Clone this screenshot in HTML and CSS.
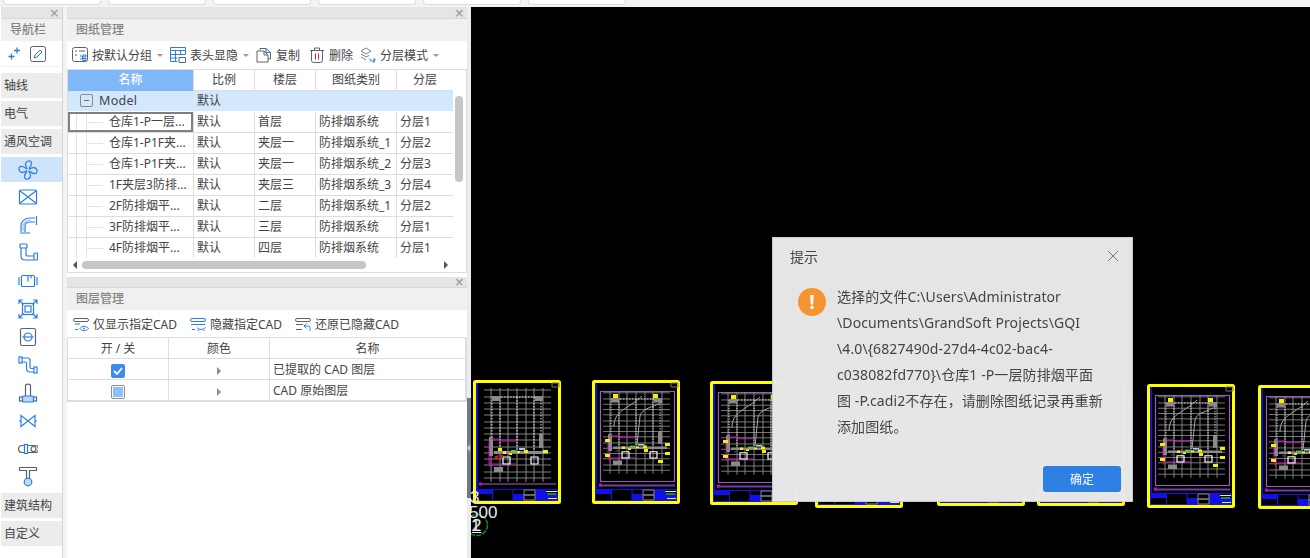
FILE: index.html
```html
<!DOCTYPE html>
<html lang="zh-CN">
<head>
    <meta charset="UTF-8">
    <meta name="viewport" content="width=device-width, initial-scale=1.0">
    <title>图纸管理</title>
    <link rel="stylesheet" href="styles.css">
</head>
<body>
    <svg class="defs" width="0" height="0">
        <symbol id="plan-clutter" viewBox="0 0 88 124">
            <path d="M18 8V102M27 8V102M35 8V102M44 8V102M53 8V102M61 8V102M70 8V102" stroke="#969696" stroke-width=".9"/>
            <path d="M11 10H78M11 17H78M11 23H78M11 29H78M11 35H78M11 42H78M11 48H78M11 54H78M11 60H78M11 67H78M11 73H78M11 79H78M11 85H78M11 92H78M11 98H78" stroke="#8c8c8c" stroke-width=".9"/>
            <path d="M19 17V72M68 17V60M19 17H68M44 17V74M27 17V74M61 17V74" stroke="#e4e4e4" stroke-width="1" stroke-dasharray="1.500 1.500"/>
            <path d="M19 16h8v5h-8zM62 16h8v5h-8zM16 57h4v19h-4zM66 54h4v14h-4zM21 71h54v3H21zM21 87h9v5H21z" fill="#8a8a8a"/>
            <path d="M18 59h8l1 2h16M16 62V84H43M24 76H26" fill="none" stroke="#d400d0" stroke-width="1"/>
            <path d="M17 79V87" stroke="#d400d0" stroke-width="1"/>
            <path d="M30 71h3v3h-3zM36 73h3v2h-3zM44 71h3v2h-3zM51 70h4v3h-4z" fill="#f4f000"/>
            <path d="M38 70h5v2h-5z" fill="#58d040"/>
            <path d="M46 68h6v2h-6z" fill="#9cd0f0"/>
            <path d="M30 77h7v7h-7zM58 77h7v7h-7z" fill="none" stroke="#fff" stroke-width="1.200"/>
        </symbol>
        <symbol id="plan-base" viewBox="0 0 88 124">
            <rect x="1.500" y="1.500" width="85" height="121" rx="1" fill="#000" stroke="#ff0" stroke-width="3"/>
            <path d="M3 3h2v106H3z" fill="#0a14e0"/>
            <path d="M79 3h7v4h-7z" fill="none" stroke="#777"/>
            <path d="M3.500 109.500h81v11h-81z" fill="none" stroke="#1414f0"/>
            <path d="M3 109h16v5H3zM40 114h11v6H40zM62 109h11v11H62zM73 114h12v6H73z" fill="#1010e8"/>
            <path d="M19.500 109v11M40 109v11" stroke="#1414f0"/>
            <path d="M51 110h11v5H51zM51 115h11v5H51z" fill="none" stroke="#888"/>
            <path d="M73 111h11v1H73zM75 118h9v1h-9z" fill="#e8e8e8"/>
            <path d="M74 113h9v2h-9z" fill="#109030"/>
        </symbol>
        <symbol id="plan-a" viewBox="0 0 88 124">
            <use href="#plan-base" width="88" height="124"/>
            <use href="#plan-clutter" width="88" height="124"/>
            <path d="M8 104H83" stroke="#b060c8" stroke-width="1"/>
            <path d="M6 102.500h3v3H6z" fill="#d400d0"/>
            <path d="M22 76h3v3h-3zM27 75h3v3h-3z" fill="#e8121c"/>
            <path d="M25 68h4v3h-4zM70 70h5v3h-5z" fill="#f4f000"/>
        </symbol>
        <symbol id="plan-b" viewBox="0 0 88 124">
            <use href="#plan-base" width="88" height="124"/>
            <path d="M8.500 11.500h74v90h-74z" fill="none" stroke="#9a5cc0" stroke-width="1.200"/>
            <use href="#plan-clutter" width="88" height="124" transform="translate(0 4) scale(1 .88)"/>
            <path d="M22 47C22 30 35 30 50 16M45 65L48 36C50 28 60 28 70 22" fill="none" stroke="#a8a8a8" stroke-width="1"/>
            <path d="M7 105.500H83" stroke="#70409c" stroke-width="2"/>
            <path d="M7 103.500h3v3H7z" fill="#d400d0"/>
            <path d="M21 14h5v4h-5zM61 14h5v4h-5zM13 59h5v3h-5zM73 63h5v3h-5zM73 72h5v3h-5zM13 74h5v3h-5zM66 80h5v3h-5zM52 69h4v3h-4z" fill="#f4f000"/>
        </symbol>
    </svg>

    <div class="tab-strip">
        <div class="tab-stub"></div>
        <div class="tab-stub"></div>
        <div class="tab-stub"></div>
        <div class="tab-stub"></div>
        <div class="tab-stub"></div>
        <div class="tab-stub"></div>
    </div>

    <div class="workspace">
        <aside class="nav-side">
            <div class="dock-head dock-head-nav"><span class="close-mark">×</span></div>
            <div class="dock-title nav-title">导航栏</div>
            <div class="nav-tools">
                <svg class="icon-16" viewBox="0 0 16 16" fill="none" stroke="#2e7de6" stroke-width="1.300"><path d="M9 1.500v6M6 4.500h6M3.500 7.500v6M.5 10.500h6"/></svg>
                <svg class="icon-16" viewBox="0 0 16 16" fill="none"><rect x=".5" y=".5" width="15" height="15" rx="2" stroke="#59626e"/><path d="M4 12l1-3 5-5 2 2-5 5z" stroke="#2e7de6"/></svg>
            </div>
            <div class="nav-sections">
                <div class="nav-group">轴线</div>
                <div class="nav-group">电气</div>
                <div class="nav-group">通风空调</div>
                <div class="nav-icons">
                    <div class="nav-icon is-active">
                        <svg class="icon-20" viewBox="0 0 20 20" fill="none" stroke="#2e7de6" stroke-width="1.200">
                            <path d="M9.500 9C7 6.500 6.500 1.500 10.500 1c4-.5 4 4 .5 7.500"/>
                            <path d="M9.500 9C7 6.500 6.500 1.500 10.500 1c4-.5 4 4 .5 7.500" transform="rotate(90 10 10)"/>
                            <path d="M9.500 9C7 6.500 6.500 1.500 10.500 1c4-.5 4 4 .5 7.500" transform="rotate(180 10 10)"/>
                            <path d="M9.500 9C7 6.500 6.500 1.500 10.500 1c4-.5 4 4 .5 7.500" transform="rotate(270 10 10)"/>
                        </svg>
                    </div>
                    <div class="nav-icon"><svg class="icon-20" viewBox="0 0 20 20" fill="none" stroke="#2e7de6" stroke-width="1.200"><rect x="1.500" y="3" width="17" height="14" rx="1"/><path d="M1.500 3.500L18.500 16.500M18.500 3.500L1.500 16.500"/></svg></div>
                    <div class="nav-icon"><svg class="icon-20" viewBox="0 0 20 20" fill="none" stroke="#2e7de6" stroke-width="1.200"><path d="M2 18h10M3 17V11C3 6 7 3 12 3h5M7 17V11C7 8.500 9 7 12 7h5M18.500 1v9" /><path d="M5 16v-5C5 7 9 5 13 5" stroke="#8dbcf5"/></svg></div>
                    <div class="nav-icon"><svg class="icon-20" viewBox="0 0 20 20" fill="none" stroke="#2e7de6" stroke-width="1.200"><rect x="2" y="1" width="7" height="4" rx="1"/><rect x="16" y="10" width="3.500" height="7" rx="1"/><path d="M3 5v8c0 2.500 1.500 4 4 4h9M8 5v6c0 1 .5 2 2 2h6"/></svg></div>
                    <div class="nav-icon"><svg class="icon-20" viewBox="0 0 20 20" fill="none" stroke="#2e7de6" stroke-width="1.200"><path d="M1 6v8M19 6v8"/><rect x="3.500" y="4.500" width="13" height="11" rx="1"/><path d="M10 4.500v6M13 4.500v3"/></svg></div>
                    <div class="nav-icon"><svg class="icon-20" viewBox="0 0 20 20" fill="none" stroke="#2e7de6" stroke-width="1.200"><path d="M1 5V1h4M15 1h4v4M1 15v4h4M15 19h4v-4M1.500 1.500l4 4M18.500 1.500l-4 4M1.500 18.500l4-4M18.500 18.500l-4-4"/><rect x="4.500" y="4.500" width="11" height="11"/><rect x="7" y="7" width="6" height="6"/></svg></div>
                    <div class="nav-icon"><svg class="icon-20" viewBox="0 0 20 20" fill="none"><rect x="2.500" y="1.500" width="15" height="17" rx="1.500" stroke="#59626e" stroke-width="1.200"/><circle cx="10" cy="10" r="4" stroke="#2e7de6" stroke-width="1.200"/><path d="M4.500 10h11" stroke="#2e7de6" stroke-width="1.200"/></svg></div>
                    <div class="nav-icon"><svg class="icon-20" viewBox="0 0 20 20" fill="none" stroke="#2e7de6" stroke-width="1.200"><rect x="1" y="2" width="3" height="6"/><rect x="16" y="12" width="3" height="6"/><path d="M4 3h6c1.500 0 2 1 2 2v7c0 1 .5 1.500 1.500 1.500H16M4 7h3.500c1 0 1 .5 1 1.500v5c0 2.500 1.500 3.500 3.500 3.500h4"/></svg></div>
                    <div class="nav-icon"><svg class="icon-20" viewBox="0 0 20 20" fill="none" stroke="#59626e" stroke-width="1.200"><path d="M7.500 13V3c0-2.500 5-2.500 5 0v10"/><rect x="1.500" y="14" width="3" height="4"/><rect x="15.500" y="14" width="3" height="4"/><rect x="4.500" y="13" width="11" height="6" rx="1" fill="#bcd9fb" stroke="#2e7de6"/></svg></div>
                    <div class="nav-icon"><svg class="icon-20" viewBox="0 0 20 20" fill="none" stroke="#2e7de6" stroke-width="1.200"><path d="M3 4.500v11L17 4.500v11zM1 10h2M17 10h2"/></svg></div>
                    <div class="nav-icon"><svg class="icon-20" viewBox="0 0 20 20" fill="none" stroke="#59626e" stroke-width="1.200"><path d="M4 6.500h13a3.500 3.500 0 0 1 0 7H4a3.500 3.500 0 0 1 0-7z"/><circle cx="15.500" cy="10" r="2.500"/><rect x="6.500" y="5.500" width="3" height="9" fill="#fff" stroke="#2e7de6"/></svg></div>
                    <div class="nav-icon"><svg class="icon-20" viewBox="0 0 20 20" fill="none" stroke="#59626e" stroke-width="1.200"><path d="M1.500 .5h17v3h-7v8h-3v-8h-7z"/><circle cx="10" cy="15" r="3.800" fill="#bcd9fb" stroke="#2e7de6"/></svg></div>
                </div>
                <div class="nav-group">建筑结构</div>
                <div class="nav-group">自定义</div>
            </div>
        </aside>

        <main class="docks">
            <section class="dock dock-drawings">
                <div class="dock-head"><span class="close-mark">×</span></div>
                <div class="dock-title">图纸管理</div>
                <div class="toolbar">
                    <div class="tool">
                        <svg class="icon-16" viewBox="0 0 16 16" fill="none" stroke="#59626e"><rect x=".5" y=".5" width="15" height="14" rx="2"/><path d="M3 4h2M7 4h6M3 8h2"/><path d="M8 9h2.500M8 12h2.500M10.500 9v3" stroke="#2e7de6"/><path d="M11 8h3v2h-3zM11 11.500h3v2h-3z" fill="#fff" stroke="#2e7de6"/></svg>
                        <span>按默认分组</span><i class="caret"></i>
                    </div>
                    <div class="tool">
                        <svg class="icon-16" viewBox="0 0 16 16" fill="none" stroke="#2e7de6"><path d="M.5.5h15v3H.5zM.5 3.500v11h7M5.500 3.500v11M10.500 3.500v4M.5 7.500h15M.5 11h7M15.500 3.500v4" /><path d="M9 10.500h6.500v5H9z" stroke="#59626e"/></svg>
                        <span>表头显隐</span><i class="caret"></i>
                    </div>
                    <div class="tool tool-copy">
                        <svg class="icon-16" viewBox="0 0 16 16" fill="none" stroke="#59626e"><path d="M4 3V1.500h6l4.500 4V12H12"/><path d="M10 1.500v4h4.500" stroke="#2e7de6"/><path d="M1 4h7l4 4v7H1z"/><path d="M8 4v4h4" /></svg>
                        <span>复制</span>
                    </div>
                    <div class="tool">
                        <svg class="icon-16" viewBox="0 0 16 16" fill="none" stroke="#59626e"><path d="M1 3.500h14M5.500 3V1h5v2M2.500 4v9.500a2 2 0 0 0 2 2h7a2 2 0 0 0 2-2V4"/><path d="M6.500 6.500v6M9.500 6.500v6" stroke="#e02020"/></svg>
                        <span>删除</span>
                    </div>
                    <div class="tool">
                        <svg class="icon-16" viewBox="0 0 16 16" fill="none" stroke="#7a8490"><path d="M1 4l5-3 5 3-5 3zM1 7l5 3 3-1.500M1 10l5 3"/><path d="M9 12h1M11 12v3M13 12h2v1.500h-2V15h2" stroke="#2e7de6"/></svg>
                        <span>分层模式</span><i class="caret"></i>
                    </div>
                </div>
                <div class="sheet">
                    <div class="sheet-main">
                        <div class="sheet-view">
                            <table class="data-table drawing-table">
                                <colgroup>
                                    <col class="c-name"><col class="c-scale"><col class="c-floor"><col class="c-kind"><col class="c-layer">
                                </colgroup>
                                <thead>
                                    <tr>
                                        <th class="th-active">名称</th><th>比例</th><th>楼层</th><th>图纸类别</th><th>分层</th>
                                    </tr>
                                </thead>
                                <tbody>
                                    <tr class="row-group">
                                        <td class="model-cell"><span class="fold-box"></span><span class="model-name">Model</span></td><td>默认</td><td></td><td></td><td></td>
                                    </tr>
                                    <tr>
                                        <td class="tree-cell is-current">仓库1-P一层...</td><td>默认</td><td>首层</td><td>防排烟系统</td><td>分层1</td>
                                    </tr>
                                    <tr>
                                        <td class="tree-cell">仓库1-P1F夹...</td><td>默认</td><td>夹层一</td><td>防排烟系统_1</td><td>分层2</td>
                                    </tr>
                                    <tr>
                                        <td class="tree-cell">仓库1-P1F夹...</td><td>默认</td><td>夹层一</td><td>防排烟系统_2</td><td>分层3</td>
                                    </tr>
                                    <tr>
                                        <td class="tree-cell">1F夹层3防排...</td><td>默认</td><td>夹层三</td><td>防排烟系统_3</td><td>分层4</td>
                                    </tr>
                                    <tr>
                                        <td class="tree-cell">2F防排烟平...</td><td>默认</td><td>二层</td><td>防排烟系统_1</td><td>分层2</td>
                                    </tr>
                                    <tr>
                                        <td class="tree-cell">3F防排烟平...</td><td>默认</td><td>三层</td><td>防排烟系统</td><td>分层1</td>
                                    </tr>
                                    <tr>
                                        <td class="tree-cell">4F防排烟平...</td><td>默认</td><td>四层</td><td>防排烟系统</td><td>分层1</td>
                                    </tr>
                                </tbody>
                            </table>
                        </div>
                        <div class="vbar"><div class="vbar-thumb"></div></div>
                    </div>
                    <div class="hbar">
                        <i class="arrow-left"></i>
                        <div class="hbar-track"><div class="hbar-thumb"></div></div>
                        <i class="arrow-right"></i>
                    </div>
                </div>
            </section>

            <section class="dock dock-layers">
                <div class="dock-head"><span class="close-mark">×</span></div>
                <div class="dock-title">图层管理</div>
                <div class="toolbar toolbar-layers">
                    <div class="tool">
                        <svg class="icon-16" viewBox="0 0 16 16" fill="none" stroke="#59626e"><path d="M2 2.500h12M2 2.500a1.500 1.500 0 0 0 0 3h12a1.500 1.500 0 0 0 0-3"/><path d="M2 8h5M2 13.500h3" stroke="#2e7de6"/><path d="M7 12.500c2-3 6-3 8.500 0-2.500 3-6.500 3-8.500 0z" stroke="#2e7de6"/><circle cx="11" cy="12.500" r="1" fill="#2e7de6" stroke="none"/></svg>
                        <span>仅显示指定CAD</span>
                    </div>
                    <div class="tool">
                        <svg class="icon-16" viewBox="0 0 16 16" fill="none" stroke="#2e7de6"><path d="M2 2.500h12M2 2.500a1.500 1.500 0 0 0 0 3h12a1.500 1.500 0 0 0 0-3M1 8.500h14"/><path d="M2 13.500h3" stroke="#59626e"/><path d="M7 11.500c2 2.500 6 2.500 8.500 0M9 13.500l-1 1.500M13.500 13.500l1 1.500"/></svg>
                        <span>隐藏指定CAD</span>
                    </div>
                    <div class="tool">
                        <svg class="icon-16" viewBox="0 0 16 16" fill="none" stroke="#59626e"><path d="M2 2.500h12M2 2.500a1.500 1.500 0 0 0 0 3h12a1.500 1.500 0 0 0 0-3M1 8.500h7M1 13.500h6"/><path d="M9 10l2.500-2.500M9 10l2.500 2.500M9 10h4c1.500 0 2 1 2 2.500V15" stroke="#2e7de6"/></svg>
                        <span>还原已隐藏CAD</span>
                    </div>
                </div>
                <div class="sheet sheet-layers">
                    <table class="data-table layer-table">
                        <colgroup>
                            <col class="c-onoff"><col class="c-color"><col>
                        </colgroup>
                        <thead>
                            <tr><th>开 / 关</th><th>颜色</th><th>名称</th></tr>
                        </thead>
                        <tbody>
                            <tr>
                                <td class="cell-center"><span class="check-on"><svg viewBox="0 0 14 14" width="14" height="14" fill="none" stroke="#fff" stroke-width="1.800"><path d="M3 7l3 3 5-6"/></svg></span></td>
                                <td class="cell-center"><i class="arrow-tiny"></i></td>
                                <td class="layer-name">已提取的 CAD 图层</td>
                            </tr>
                            <tr>
                                <td class="cell-center"><span class="check-part"></span></td>
                                <td class="cell-center"><i class="arrow-tiny"></i></td>
                                <td class="layer-name">CAD 原始图层</td>
                            </tr>
                        </tbody>
                    </table>
                </div>
            </section>
        </main>

        <div class="splitter"><div class="splitter-grip"><i></i></div></div>

        <div class="canvas">
            <svg class="plan plan-1"><use href="#plan-a"/></svg>
            <svg class="plan plan-2"><use href="#plan-b"/></svg>
            <svg class="plan plan-3"><use href="#plan-b"/></svg>
            <svg class="plan plan-4"><use href="#plan-b"/></svg>
            <svg class="plan plan-5"><use href="#plan-b"/></svg>
            <svg class="plan plan-6"><use href="#plan-b"/></svg>
            <svg class="plan plan-7"><use href="#plan-b"/></svg>
            <svg class="plan plan-8"><use href="#plan-b"/></svg>

            <svg class="axis-ring" viewBox="0 0 24 24" fill="none"><circle cx="12" cy="12" r="10.500" stroke="#109030" stroke-width="1.300" stroke-dasharray="5 1"/></svg>
            <span class="cad-text cad-3">3</span>
            <span class="cad-text cad-500">500</span>
            <span class="cad-text cad-2">2</span>
            <span class="cad-text cad-1">1</span>

            <div class="dialog">
                <div class="dialog-head">
                    <span>提示</span>
                    <svg class="dialog-close" viewBox="0 0 12 12" fill="none" stroke="#777"><path d="M1 1l10 10M11 1L1 11"/></svg>
                </div>
                <div class="dialog-body">
                    <div class="warn-badge">!</div>
                    <p class="dialog-text">选择的文件C:\Users\Administrator<br>\Documents\GrandSoft Projects\GQI<br>\4.0\{6827490d-27d4-4c02-bac4-<br>c038082fd770}\仓库1 -P一层防排烟平面<br>图 -P.cadi2不存在，请删除图纸记录再重新<br>添加图纸。</p>
                </div>
                <div class="dialog-foot">
                    <button class="btn-ok">确定</button>
                </div>
            </div>
        </div>
    </div>
</body>
</html>
```

FILE: styles.css
```css
* {
    box-sizing: border-box;
}
html, body {
    margin: 0;
    height: 100%;
    overflow: hidden;
}
body {
    background-color: #f3f3f3;
    font-family: "Noto Sans", "Noto Sans CJK SC", sans-serif;
    font-size: 12px;
    color: #444;
}
.defs {
    display: block;
    height: 0;
}
.tab-strip {
    display: flex;
    gap: 7px;
    height: 7px;
    padding-left: 3px;
}
.tab-stub {
    width: 98px;
    height: 5px;
    background-color: white;
    border: 1px solid #dcdcdc;
    border-top: none;
    border-radius: 0 0 4px 4px;
}
.workspace {
    display: flex;
    height: 551px;
}

/* left navigation */
.nav-side {
    width: 63px;
    flex: none;
    display: flex;
    flex-direction: column;
    border-right: 1px solid #d4d4d4;
    background-color: white;
}
.dock-head {
    height: 12px;
    flex: none;
    display: flex;
    justify-content: flex-end;
    align-items: center;
    background-color: #e5e5e5;
    border-bottom: 1px solid #d8d8d8;
    padding-right: 3px;
}
.dock-head-nav {
    margin-left: 1px;
    padding-right: 3px;
}
.close-mark {
    color: #9a9a9a;
    font-size: 16px;
    line-height: 10px;
}
.dock-title {
    height: 22px;
    flex: none;
    line-height: 22px;
    padding-left: 9px;
    background-color: #f0f0f0;
    color: #858585;
    font-weight: 500;
}
.nav-title {
    margin-left: 1px;
}
.nav-tools {
    height: 26px;
    flex: none;
    display: flex;
    align-items: center;
    gap: 6px;
    padding-left: 8px;
    background-color: white;
    border-radius: 4px;
    border-bottom: 1px solid #eee;
}
.nav-sections {
    padding: 6px 0 0 1px;
    display: flex;
    flex-direction: column;
    gap: 3px;
}
.nav-group {
    height: 25px;
    line-height: 25px;
    padding-left: 3px;
    background-color: #ececec;
    color: #444;
}
.nav-icons {
    display: flex;
    flex-direction: column;
}
.nav-icon {
    height: 28px;
    display: flex;
    align-items: center;
    padding-left: 17px;
}
.nav-icon:first-child {
    height: 25px;
    margin-bottom: 1px;
}
.nav-icon:last-child {
    height: 27px;
}
.is-active {
    background-color: #cfe4fb;
}
.icon-16 {
    width: 16px;
    height: 16px;
    flex: none;
}
.icon-20 {
    width: 20px;
    height: 20px;
    flex: none;
}

/* dock panels */
.docks {
    width: 400px;
    margin-left: 4px;
    flex: none;
    display: flex;
    flex-direction: column;
    background-color: white;
}
.dock-drawings {
    height: 266px;
    flex: none;
    margin-bottom: 4px;
    display: flex;
    flex-direction: column;
}
.dock-layers {
    flex: 1;
    display: flex;
    flex-direction: column;
}
.dock-layers .dock-head {
    height: 11px;
}
.toolbar {
    height: 26px;
    margin-top: 1px;
    flex: none;
    display: flex;
    align-items: center;
    gap: 7px;
    padding-left: 5px;
    background-color: white;
    border-radius: 4px;
    color: #444;
    white-space: nowrap;
}
.toolbar-layers {
    gap: 13px;
    padding-left: 6px;
}
.tool {
    display: flex;
    align-items: center;
    gap: 4px;
}
.tool-copy {
    margin-right: 2px;
}
.caret {
    display: block;
    width: 0;
    height: 0;
    margin-left: 1px;
    border-left: 3px solid transparent;
    border-right: 3px solid transparent;
    border-top: 3px solid #999;
}
.sheet {
    height: 204px;
    margin-top: 1px;
    border: 1px solid #ddd;
    flex: none;
    display: flex;
    flex-direction: column;
}
.sheet-layers {
    height: auto;
    margin-top: 0;
    border-right: 1px solid #ddd;
}
.sheet-main {
    display: flex;
}
.sheet-view {
    width: 385px;
    height: 188px;
    overflow: hidden;
    flex: none;
}
.vbar {
    flex: 1;
    padding: 26px 3px 0 2px;
}
.vbar-thumb {
    height: 86px;
    background-color: #c6c6c6;
    border-radius: 4px;
}
.hbar {
    flex: 1;
    display: flex;
    align-items: center;
    padding: 0 18px 0 5px;
    gap: 5px;
}
.hbar-track {
    flex: 1;
}
.hbar-thumb {
    width: 284px;
    height: 8px;
    background-color: #c6c6c6;
    border-radius: 4px;
}
.arrow-left {
    border-top: 4px solid transparent;
    border-bottom: 4px solid transparent;
    border-right: 4px solid #555;
}
.arrow-right {
    border-top: 4px solid transparent;
    border-bottom: 4px solid transparent;
    border-left: 4px solid #555;
}

/* tables */
.data-table {
    width: 100%;
    table-layout: fixed;
    border-collapse: separate;
    border-spacing: 0;
}
.data-table th, .data-table td {
    height: 21px;
    padding: 0 0 0 3px;
    border-right: 1px solid #ddd;
    border-bottom: 1px solid #ddd;
    white-space: nowrap;
    overflow: hidden;
    font-weight: 400;
    color: #444;
    line-height: 16px;
}
.data-table th {
    text-align: center;
    padding: 0;
}
.layer-table th, .data-table.layer-table td {
    padding-top: 2px;
}
.drawing-table {
    width: 385px;
}
.drawing-table th:last-child, .drawing-table td:last-child {
    border-right: none;
}
.c-name { width: 126px; }
.c-scale { width: 61px; }
.c-floor { width: 61px; }
.c-kind { width: 81px; }
.c-layer { width: 56px; }
.c-onoff { width: 101px; }
.c-color { width: 101px; }
.data-table th.th-active {
    background-color: #7fb8f8;
    color: white;
    font-weight: 500;
    border-bottom-color: #7fb8f8;
}
.data-table .row-group td {
    background-color: #d3e7fd;
    border-right-color: #dfe9f5;
    border-bottom: 1px solid white;
}
.data-table .row-group .model-cell {
    padding-left: 12px;
}
.fold-box {
    display: inline-block;
    width: 13px;
    height: 13px;
    margin-right: 6px;
    vertical-align: -2px;
    border: 1px solid #8a8a8a;
    border-radius: 2px;
    background: linear-gradient(#666, #666) center / 5px 1px no-repeat;
}
.model-name {
    font-size: 12.500px;
    letter-spacing: .3px;
}
.data-table td.tree-cell {
    padding-left: 41px;
    background:
        linear-gradient(#e4e4e4, #e4e4e4) 8px 0 / 1px 100% no-repeat,
        linear-gradient(#e4e4e4, #e4e4e4) 18px 0 / 1px 100% no-repeat,
        linear-gradient(#e4e4e4, #e4e4e4) 19px 10px / 16px 1px no-repeat;
}
.data-table td.is-current {
    box-shadow: inset 0 0 0 2px #808080;
}
.cell-center {
    text-align: center;
}
.data-table td.cell-center {
    padding-left: 0;
    padding-right: 0;
}
.data-table td.layer-name {
    padding-left: 3px;
}
.check-on {
    display: inline-flex;
    width: 14px;
    height: 14px;
    vertical-align: middle;
    background-color: #3d8bf0;
    border-radius: 2px;
}
.check-part {
    display: inline-block;
    width: 14px;
    height: 14px;
    vertical-align: middle;
    border: 1px solid #8a8a8a;
    border-radius: 2px;
    background: linear-gradient(#8ec0fb, #8ec0fb) center / 10px 10px no-repeat;
}
.arrow-tiny {
    display: inline-block;
    vertical-align: middle;
    border-top: 4px solid transparent;
    border-bottom: 4px solid transparent;
    border-left: 4px solid #8a8a8a;
}

/* splitter between docks and canvas */
.splitter {
    width: 4px;
    flex: none;
    background-color: #ececec;
    padding-top: 391px;
}
.splitter-grip {
    height: 100px;
    background-color: #707a85;
    display: flex;
    align-items: center;
}
.splitter-grip i {
    border-top: 4px solid transparent;
    border-bottom: 4px solid transparent;
    border-right: 3px solid #c4c8cc;
}

/* CAD canvas, free placement */
.canvas {
    flex: 1;
    position: relative;
    background-color: black;
    overflow: hidden;
}
.plan {
    position: absolute;
    width: 88px;
    height: 124px;
}
.plan use {
    width: 88px;
    height: 124px;
}
.plan-1 { left: 2px; top: 373px; }
.plan-2 { left: 121px; top: 373px; }
.plan-3 { left: 239px; top: 374px; }
.plan-4 { left: 344px; top: 377px; }
.plan-5 { left: 466px; top: 375px; }
.plan-6 { left: 566px; top: 375px; }
.plan-7 { left: 676px; top: 377px; }
.plan-8 { left: 787px; top: 378px; }
.cad-text {
    position: absolute;
    color: #e8e8e8;
    font-family: "Liberation Sans", sans-serif;
    font-weight: 400;
    line-height: 1;
    font-size: 17px;
}
.cad-3 { left: -1px; top: 482px; }
.cad-500 { left: -2px; top: 497px; }
.cad-2 { left: 1px; top: 510px; text-decoration: underline; }
.cad-1 { left: 0; top: 510px; }
.axis-ring {
    position: absolute;
    left: -6px;
    top: 506px;
    width: 24px;
    height: 24px;
}
.dialog {
    position: absolute;
    left: 301px;
    top: 230px;
    width: 361px;
    height: 265px;
    display: flex;
    flex-direction: column;
    background-color: rgba(236, 236, 236, .97);
    backdrop-filter: blur(14px);
    border: 1px solid #c9c9c9;
    color: #444;
}
.dialog-head {
    height: 36px;
    flex: none;
    display: flex;
    justify-content: space-between;
    align-items: center;
    padding: 0 13px 0 17px;
    font-size: 14px;
}
.dialog-close {
    width: 12px;
    height: 12px;
}
.dialog-body {
    flex: 1;
    display: flex;
    align-items: flex-start;
    gap: 11px;
    padding: 14px 0 0 25px;
}
.warn-badge {
    width: 28px;
    height: 28px;
    flex: none;
    border-radius: 50%;
    background-color: #f69433;
    color: white;
    font-size: 19px;
    font-weight: 700;
    line-height: 28px;
    text-align: center;
}
.dialog-text {
    margin: -4px 0 0;
    font-size: 14px;
    line-height: 26px;
    letter-spacing: .1px;
    white-space: nowrap;
}
.dialog-foot {
    display: flex;
    justify-content: flex-end;
    padding: 0 11px 9px 0;
}
.btn-ok {
    width: 78px;
    height: 26px;
    padding: 0;
    border: none;
    border-radius: 3px;
    background-color: #2f80e4;
    color: white;
    font-family: inherit;
    font-size: 12px;
}
```
